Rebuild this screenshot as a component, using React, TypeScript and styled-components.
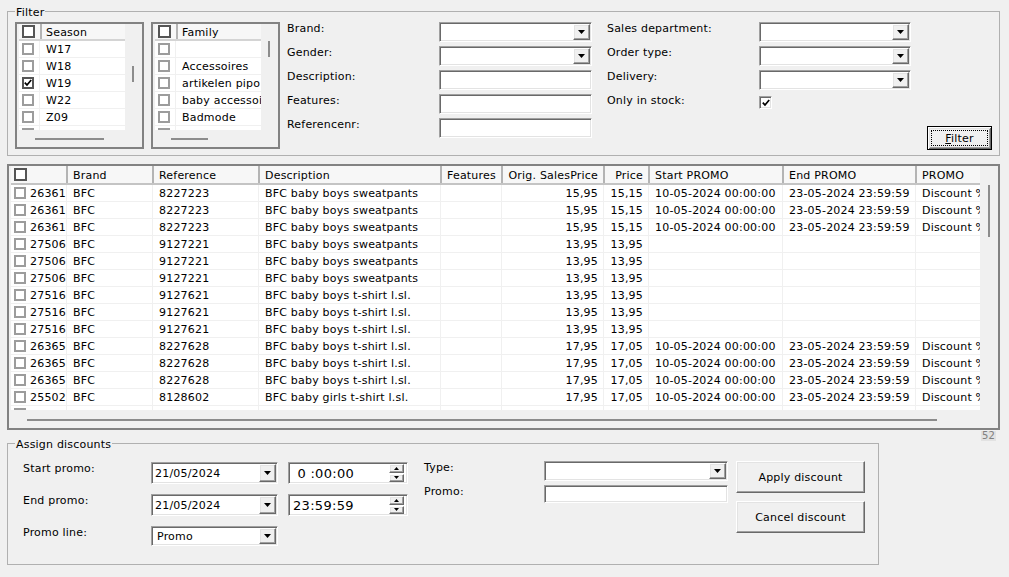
import styled, { createGlobalStyle, css } from 'styled-components'

const GlobalStyle = createGlobalStyle`
  * { box-sizing: border-box; }
  html, body { margin: 0; padding: 0; background: #f0f0f0; }
  body {
    font-family: "DejaVu Sans", Verdana, sans-serif;
    font-size: 11px;
    letter-spacing: 0.2px;
    color: #000;
  }
`

const sunken = css`
  border: 1px solid;
  border-color: #a0a0a0 #ffffff #ffffff #a0a0a0;
  box-shadow: inset 1px 1px 0 #696969, inset -1px -1px 0 #e3e3e3;
  background: #fff;
`

const raised = css`
  border: 1px solid;
  border-color: #ffffff #696969 #696969 #ffffff;
  box-shadow: inset -1px -1px 0 #a0a0a0, inset 1px 1px 0 #e3e3e3;
  background: #f0f0f0;
`

const Page = styled.div`
  width: 1009px;
  height: 577px;
  padding: 11px 0 0 7px;
  overflow: hidden;
`

const Group = styled.div<{ $w: number; $h: number }>`
  position: relative;
  width: ${p => p.$w}px;
  height: ${p => p.$h}px;
  border: 1px solid #b0b0b0;
`

const GroupTitle = styled.span`
  position: absolute;
  top: -6px;
  left: 7px;
  padding: 0 1px;
  line-height: 13px;
  background: #f0f0f0;
`

const FilterBody = styled.div`
  display: flex;
  align-items: flex-start;
  gap: 7px;
  height: 100%;
  padding: 10px 7px 5px 7px;
`

/* ---------- check list boxes ---------- */

const ListFrame = styled.div`
  flex: none;
  width: 129px;
  height: 127px;
  border: 2px solid #828282;
  padding-left: 2px;
  display: grid;
  grid-template-columns: 106px 17px;
  grid-template-rows: 106px 17px;
`

const ListArea = styled.div`
  background: #fff;
  overflow: hidden;
`

const ListHead = styled.div`
  display: grid;
  grid-template-columns: 21px 1fr;
  height: 17px;
  background: #f7f7f7;
  border-bottom: 2px solid #d4d4d4;
`

const ListHeadCell = styled.div<{ $sep?: boolean }>`
  display: flex;
  align-items: center;
  padding-left: ${p => (p.$sep ? 4 : 3)}px;
  padding-top: ${p => (p.$sep ? 2 : 0)}px;
  border-left: ${p => (p.$sep ? '2px solid #b4b4b4' : 'none')};
  line-height: 13px;
  white-space: nowrap;
  overflow: hidden;
`

const ListRow = styled.div`
  display: grid;
  grid-template-columns: 21px 1fr;
  height: 17px;
  border-bottom: 1px solid #f0f0f0;
`

const ListCheckCell = styled.div`
  display: flex;
  align-items: center;
  padding-left: 3px;
  border-right: 1px solid #f0f0f0;
`

const ListText = styled.div`
  padding: 1px 0 0 6px;
  line-height: 15px;
  white-space: nowrap;
  overflow: hidden;
`

const VTrack = styled.div`
  display: flex;
  flex-direction: column;
`

const VThumb = styled.div<{ $top: number; $len: number; $left: number }>`
  width: 2px;
  height: ${p => p.$len}px;
  margin-top: ${p => p.$top}px;
  margin-left: ${p => p.$left}px;
  background: #8c8c8c;
`

const HTrack = styled.div`
  grid-column: 1 / -1;
  display: flex;
  align-items: flex-start;
`

const HThumb = styled.div<{ $top: number; $len: number; $left: number }>`
  height: 2px;
  width: ${p => p.$len}px;
  margin-top: ${p => p.$top}px;
  margin-left: ${p => p.$left}px;
  background: #8c8c8c;
`

/* ---------- checkbox ---------- */

const Box = styled.span<{ $dark?: boolean; $size?: number }>`
  flex: none;
  display: inline-flex;
  align-items: center;
  justify-content: center;
  width: ${p => p.$size ?? 12}px;
  height: ${p => p.$size ?? 12}px;
  border: 2px solid ${p => (p.$dark ? '#555555' : '#9c9c9c')};
  background: #fff;
`

const SunkenBox = styled.span`
  ${sunken};
  display: inline-flex;
  align-items: center;
  justify-content: center;
  width: 13px;
  height: 13px;
  margin: 2px 0 0 0;
`

const Tick = () => (
  <svg width="8" height="8" viewBox="0 0 8 8">
    <path d="M0.8 3.6 L3 6 L7.2 1" fill="none" stroke="#000" strokeWidth="1.7" />
  </svg>
)

const CheckBox = ({ checked, dark, size }: { checked?: boolean; dark?: boolean; size?: number }) => (
  <Box $dark={dark || checked} $size={size}>
    {checked && <Tick />}
  </Box>
)

type ListProps = {
  title: string
  items: { label: string; checked?: boolean }[]
  vTop: number
  hLen: number
}

const CheckList = ({ title, items, vTop, hLen }: ListProps) => (
  <ListFrame>
    <ListArea>
      <ListHead>
        <ListHeadCell>
          <CheckBox dark size={13} />
        </ListHeadCell>
        <ListHeadCell $sep>{title}</ListHeadCell>
      </ListHead>
      {items.map((it, i) => (
        <ListRow key={i}>
          <ListCheckCell>
            <CheckBox checked={it.checked} />
          </ListCheckCell>
          <ListText>{it.label}</ListText>
        </ListRow>
      ))}
    </ListArea>
    <VTrack>
      <VThumb $top={vTop} $len={16} $left={7} />
    </VTrack>
    <HTrack>
      <HThumb $top={8} $len={hLen} $left={16} />
    </HTrack>
  </ListFrame>
)

/* ---------- fields ---------- */

const FieldColumn = styled.div<{ $input: number }>`
  flex: none;
  display: grid;
  grid-template-columns: 152px ${p => p.$input}px;
  grid-auto-rows: 20px;
  row-gap: 4px;
`

const FieldPair = styled.div`
  display: flex;
  gap: 15px;
`

const Label = styled.div`
  line-height: 13px;
  white-space: nowrap;
`

const Combo = styled.div<{ $h?: number }>`
  ${sunken};
  display: flex;
  align-items: stretch;
  height: ${p => p.$h ?? 20}px;
  padding: 1px;
`

const ComboText = styled.span<{ $pad?: number }>`
  flex: 1;
  display: flex;
  align-items: center;
  padding-left: ${p => p.$pad ?? 3}px;
  white-space: pre;
  overflow: hidden;
`

const DropButton = styled.span`
  ${raised};
  flex: none;
  width: 17px;
  display: flex;
  align-items: center;
  justify-content: center;
`

const Arrow = ({ up, w = 7 }: { up?: boolean; w?: number }) => (
  <svg width={w} height={Math.ceil(w / 2)} viewBox={`0 0 ${w} ${Math.ceil(w / 2)}`}>
    <path d={up ? `M0 ${Math.ceil(w / 2)}H${w}L${w / 2} 0z` : `M0 0H${w}L${w / 2} ${Math.ceil(w / 2)}z`} fill="#000" />
  </svg>
)

const Field = styled.div<{ $h?: number }>`
  ${sunken};
  height: ${p => p.$h ?? 20}px;
`

const ComboBox = ({ value, h, pad }: { value?: string; h?: number; pad?: number }) => (
  <Combo $h={h}>
    <ComboText $pad={pad}>{value}</ComboText>
    <DropButton>
      <Arrow />
    </DropButton>
  </Combo>
)

const Button = styled.button<{ $w: number; $h: number }>`
  ${raised};
  width: ${p => p.$w}px;
  height: ${p => p.$h}px;
  padding: 0;
  font: inherit;
  letter-spacing: inherit;
  color: #000;
`

const DefaultButton = styled(Button)`
  position: relative;
  align-self: flex-end;
  margin-left: 9px;
  border: 1px solid #000;
  box-shadow: inset 1px 1px 0 #fff, inset -1px -1px 0 #696969, inset 2px 2px 0 #e3e3e3, inset -2px -2px 0 #a0a0a0;

  &::after {
    content: '';
    position: absolute;
    inset: 3px;
    border: 1px dotted #000;
  }
`

/* ---------- data grid ---------- */

const cols = [55, 86, 106, 182, 61, 102, 45, 134, 133, 65]
const colTemplate = cols.map(c => `${c}px`).join(' ')

const GridFrame = styled.div`
  margin-top: 8px;
  width: 993px;
  height: 266px;
  border: 2px solid #828282;
  padding-left: 2px;
  display: grid;
  grid-template-columns: 969px 17px;
  grid-template-rows: 244px 18px;
`

const Table = styled.div`
  background: #fff;
  overflow: hidden;
`

const HeadRow = styled.div`
  display: grid;
  grid-template-columns: ${colTemplate};
  height: 19px;
  background: #f7f7f7;
  border-bottom: 2px solid #c4c4c4;
`

const HeadCell = styled.div<{ $right?: boolean; $first?: boolean }>`
  display: flex;
  align-items: center;
  justify-content: ${p => (p.$right ? 'flex-end' : 'flex-start')};
  padding: ${p => (p.$first ? '0 0 0 3px' : p.$right ? '2px 5px 0 0' : '2px 0 0 5px')};
  border-left: ${p => (p.$first ? 'none' : '2px solid #b4b4b4')};
  white-space: nowrap;
  overflow: hidden;
  line-height: 15px;
`

const BodyRow = styled.div`
  display: grid;
  grid-template-columns: ${colTemplate};
  height: 17px;
  border-bottom: 1px solid #f0f0f0;
`

const BodyCell = styled.div<{ $right?: boolean; $first?: boolean }>`
  display: flex;
  align-items: center;
  gap: 4px;
  justify-content: ${p => (p.$right ? 'flex-end' : 'flex-start')};
  padding: ${p => (p.$first ? '0 0 0 3px' : p.$right ? '1px 5px 0 0' : '1px 0 0 6px')};
  border-left: ${p => (p.$first ? 'none' : '1px solid #f0f0f0')};
  line-height: 15px;
  white-space: nowrap;
  overflow: hidden;
`

const IdText = styled.span`
  padding-top: 1px;
`

const CountRow = styled.div`
  width: 993px;
  height: 13px;
  display: flex;
  justify-content: flex-end;
  align-items: flex-start;
  padding: 1px 4px 0 0;
`

const Count = styled.span`
  font-size: 10px;
  line-height: 10px;
  padding: 0 1px;
  color: #808080;
  background: #e2e2e2;
`

/* ---------- assign discounts ---------- */

const AssignBody = styled.div`
  display: flex;
  align-items: flex-start;
  padding: 17px 0 0 15px;
`

const AssignGrid = styled.div`
  margin-top: 1px;
  display: grid;
  grid-template-columns: 118px 127px 120px;
  grid-template-rows: 22px 22px 20px;
  column-gap: 10px;
  row-gap: 10px;
`

const PromoGrid = styled.div`
  margin-left: 16px;
  display: grid;
  grid-template-columns: 120px 184px;
  grid-template-rows: 20px 18px;
  row-gap: 4px;
`

const ButtonColumn = styled.div`
  margin-left: 8px;
  display: flex;
  flex-direction: column;
  gap: 8px;
`

const Spin = styled.div`
  ${sunken};
  display: flex;
  align-items: stretch;
  padding: 1px 3px 1px 1px;
`

const SpinText = styled.span`
  flex: 1;
  display: flex;
  align-items: center;
  padding-left: 3px;
  font-size: 13px;
  letter-spacing: 0.3px;
  white-space: pre;
`

const SpinButtons = styled.div`
  flex: none;
  width: 15px;
  display: flex;
  flex-direction: column;
  justify-content: center;
  gap: 1px;
`

const SpinButton = styled.span`
  ${raised};
  height: 9px;
  display: flex;
  align-items: center;
  justify-content: center;
`

const TimeBox = ({ value }: { value: string }) => (
  <Spin>
    <SpinText>{value}</SpinText>
    <SpinButtons>
      <SpinButton>
        <Arrow up w={5} />
      </SpinButton>
      <SpinButton>
        <Arrow w={5} />
      </SpinButton>
    </SpinButtons>
  </Spin>
)

/* ---------- data ---------- */

type Article = {
  id: string
  ref: string
  desc: string
  orig: string
  price: string
  promo?: boolean
}

const START = '10-05-2024 00:00:00'
const END = '23-05-2024 23:59:59'

const articles: Article[] = [
  { id: '26361', ref: '8227223', desc: 'BFC baby boys sweatpants', orig: '15,95', price: '15,15', promo: true },
  { id: '26361', ref: '8227223', desc: 'BFC baby boys sweatpants', orig: '15,95', price: '15,15', promo: true },
  { id: '26361', ref: '8227223', desc: 'BFC baby boys sweatpants', orig: '15,95', price: '15,15', promo: true },
  { id: '27506', ref: '9127221', desc: 'BFC baby boys sweatpants', orig: '13,95', price: '13,95' },
  { id: '27506', ref: '9127221', desc: 'BFC baby boys sweatpants', orig: '13,95', price: '13,95' },
  { id: '27506', ref: '9127221', desc: 'BFC baby boys sweatpants', orig: '13,95', price: '13,95' },
  { id: '27516', ref: '9127621', desc: 'BFC baby boys t-shirt l.sl.', orig: '13,95', price: '13,95' },
  { id: '27516', ref: '9127621', desc: 'BFC baby boys t-shirt l.sl.', orig: '13,95', price: '13,95' },
  { id: '27516', ref: '9127621', desc: 'BFC baby boys t-shirt l.sl.', orig: '13,95', price: '13,95' },
  { id: '26365', ref: '8227628', desc: 'BFC baby boys t-shirt l.sl.', orig: '17,95', price: '17,05', promo: true },
  { id: '26365', ref: '8227628', desc: 'BFC baby boys t-shirt l.sl.', orig: '17,95', price: '17,05', promo: true },
  { id: '26365', ref: '8227628', desc: 'BFC baby boys t-shirt l.sl.', orig: '17,95', price: '17,05', promo: true },
  { id: '25502', ref: '8128602', desc: 'BFC baby girls t-shirt l.sl.', orig: '17,95', price: '17,05', promo: true },
]

const headers = ['Brand', 'Reference', 'Description', 'Features', 'Orig. SalesPrice', 'Price', 'Start PROMO', 'End PROMO', 'PROMO']
const rightHeaders = ['Orig. SalesPrice', 'Price']

const seasons = [{ label: 'W17' }, { label: 'W18' }, { label: 'W19', checked: true }, { label: 'W22' }, { label: 'Z09' }, { label: '' }]
const families = [{ label: '' }, { label: 'Accessoires' }, { label: 'artikelen pipo' }, { label: 'baby accessoires' }, { label: 'Badmode' }, { label: '' }]

const App = () => {
  return (
    <Page>
      <GlobalStyle />

      <Group $w={993} $h={145}>
        <GroupTitle>Filter</GroupTitle>
        <FilterBody>
          <CheckList title="Season" items={seasons} vTop={42} hLen={69} />
          <CheckList title="Family" items={families} vTop={17} hLen={37} />
          <FieldPair>
            <FieldColumn $input={153}>
              <Label>Brand:</Label>
              <ComboBox />
              <Label>Gender:</Label>
              <ComboBox />
              <Label>Description:</Label>
              <Field />
              <Label>Features:</Label>
              <Field />
              <Label>Referencenr:</Label>
              <Field />
            </FieldColumn>
            <FieldColumn $input={152}>
              <Label>Sales department:</Label>
              <ComboBox />
              <Label>Order type:</Label>
              <ComboBox />
              <Label>Delivery:</Label>
              <ComboBox />
              <Label>Only in stock:</Label>
              <div>
                <SunkenBox>
                  <Tick />
                </SunkenBox>
              </div>
            </FieldColumn>
          </FieldPair>
          <DefaultButton $w={65} $h={24}>
            <u>F</u>ilter
          </DefaultButton>
        </FilterBody>
      </Group>

      <GridFrame>
        <Table>
          <HeadRow>
            <HeadCell $first>
              <CheckBox dark size={13} />
            </HeadCell>
            {headers.map(h => (
              <HeadCell key={h} $right={rightHeaders.includes(h)}>
                {h}
              </HeadCell>
            ))}
          </HeadRow>
          {articles.map((a, i) => (
            <BodyRow key={i}>
              <BodyCell $first>
                <CheckBox />
                <IdText>{a.id}</IdText>
              </BodyCell>
              <BodyCell>BFC</BodyCell>
              <BodyCell>{a.ref}</BodyCell>
              <BodyCell>{a.desc}</BodyCell>
              <BodyCell />
              <BodyCell $right>{a.orig}</BodyCell>
              <BodyCell $right>{a.price}</BodyCell>
              <BodyCell>{a.promo ? START : ''}</BodyCell>
              <BodyCell>{a.promo ? END : ''}</BodyCell>
              <BodyCell>{a.promo ? 'Discount %' : ''}</BodyCell>
            </BodyRow>
          ))}
          <BodyRow>
            <BodyCell $first>
              <CheckBox />
            </BodyCell>
            {headers.map(h => (
              <BodyCell key={h} />
            ))}
          </BodyRow>
        </Table>
        <VTrack>
          <VThumb $top={19} $len={52} $left={8} />
        </VTrack>
        <HTrack>
          <HThumb $top={9} $len={910} $left={16} />
        </HTrack>
      </GridFrame>

      <CountRow>
        <Count>52</Count>
      </CountRow>

      <Group $w={872} $h={122}>
        <GroupTitle>Assign discounts</GroupTitle>
        <AssignBody>
          <AssignGrid>
            <Label>Start promo:</Label>
            <ComboBox value="21/05/2024" h={22} pad={2} />
            <TimeBox value=" 0 :00:00" />
            <Label>End promo:</Label>
            <ComboBox value="21/05/2024" h={22} pad={2} />
            <TimeBox value="23:59:59" />
            <Label>Promo line:</Label>
            <ComboBox value="Promo" pad={4} />
          </AssignGrid>
          <PromoGrid>
            <Label>Type:</Label>
            <ComboBox />
            <Label>Promo:</Label>
            <Field $h={18} />
          </PromoGrid>
          <ButtonColumn>
            <Button $w={129} $h={32}>Apply discount</Button>
            <Button $w={129} $h={32}>Cancel discount</Button>
          </ButtonColumn>
        </AssignBody>
      </Group>
    </Page>
  )
}

export default App
